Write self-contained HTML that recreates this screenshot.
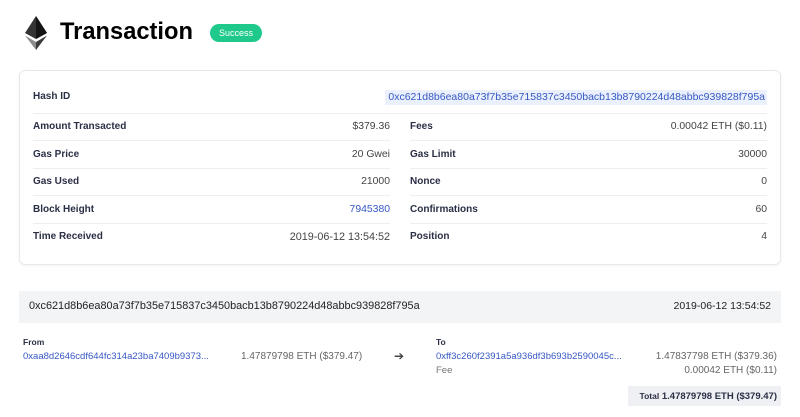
<!DOCTYPE html>
<html><head><style>
*{margin:0;padding:0;box-sizing:border-box}
body{width:800px;height:417px;background:#fff;font-family:"Liberation Sans",sans-serif;color:#333;position:relative;overflow:hidden;font-size:10px}
.a{position:absolute;white-space:nowrap}
.lbl{font-weight:bold;color:#2a2f45}
.v{text-align:right;color:#444;font-size:10.4px}
.ln{position:absolute;height:1px;background:#eceef1}
.blue{color:#3658c4}
</style></head><body>
<svg class="a" style="left:25px;top:16px" width="22" height="34" viewBox="0 0 22 34">
<polygon points="11,0 0,17 11,23 22,17" fill="#343434"/>
<polygon points="11,0 11,23 22,17" fill="#141414"/>
<polygon points="0,19.5 11,34 11,26" fill="#8c8c8c"/>
<polygon points="22,19.5 11,34 11,26" fill="#3c3c3b"/>
</svg>
<div class="a" style="left:60px;top:19px;font-size:23.7px;font-weight:bold;color:#000">Transaction</div>
<div class="a" style="left:210px;top:24px;width:52px;height:18px;border-radius:9px;background:#1ec98b;color:#fff;font-size:9px;text-align:center;line-height:18px">Success</div>

<div class="a" style="left:19px;top:70px;width:762px;height:195px;border:1px solid #e6e8ec;border-radius:6px;box-shadow:0 1px 3px rgba(0,0,0,0.05)"></div>
<div class="a lbl" style="left:33px;top:91px">Hash ID</div>
<div class="a blue" style="left:385px;top:90px;width:382px;height:15px;background:#eaf0fc;text-align:right;padding-right:2px;line-height:15px;font-size:10.5px">0xc621d8b6ea80a73f7b35e715837c3450bacb13b8790224d48abbc939828f795a</div>
<div class="ln" style="left:33px;top:113px;width:734px"></div>

<div class="a lbl" style="left:33px;top:121px">Amount Transacted</div><div class="a v" style="right:410px;top:121px">$379.36</div>
<div class="a lbl" style="left:410px;top:121px">Fees</div><div class="a v" style="right:33px;top:121px">0.00042 ETH ($0.11)</div>
<div class="ln" style="left:33px;top:140px;width:357px"></div><div class="ln" style="left:410px;top:140px;width:357px"></div>
<div class="a lbl" style="left:33px;top:149px">Gas Price</div><div class="a v" style="right:410px;top:149px">20 Gwei</div>
<div class="a lbl" style="left:410px;top:149px">Gas Limit</div><div class="a v" style="right:33px;top:149px">30000</div>
<div class="ln" style="left:33px;top:168px;width:357px"></div><div class="ln" style="left:410px;top:168px;width:357px"></div>
<div class="a lbl" style="left:33px;top:176px">Gas Used</div><div class="a v" style="right:410px;top:176px">21000</div>
<div class="a lbl" style="left:410px;top:176px">Nonce</div><div class="a v" style="right:33px;top:176px">0</div>
<div class="ln" style="left:33px;top:195px;width:357px"></div><div class="ln" style="left:410px;top:195px;width:357px"></div>
<div class="a lbl" style="left:33px;top:204px">Block Height</div><div class="a v blue" style="right:410px;top:204px">7945380</div>
<div class="a lbl" style="left:410px;top:204px">Confirmations</div><div class="a v" style="right:33px;top:204px">60</div>
<div class="ln" style="left:33px;top:223px;width:357px"></div><div class="ln" style="left:410px;top:223px;width:357px"></div>
<div class="a lbl" style="left:33px;top:231px">Time Received</div><div class="a v" style="right:410px;top:231px;font-size:10.8px">2019-06-12 13:54:52</div>
<div class="a lbl" style="left:410px;top:231px">Position</div><div class="a v" style="right:33px;top:231px">4</div>

<div class="a" style="left:19px;top:291px;width:762px;height:32px;background:#f3f4f6"></div>
<div class="a" style="left:29px;top:300px;font-size:10.9px;color:#222">0xc621d8b6ea80a73f7b35e715837c3450bacb13b8790224d48abbc939828f795a</div>
<div class="a" style="right:29px;top:300px;font-size:10.5px;color:#222">2019-06-12 13:54:52</div>

<div class="a lbl" style="left:23px;top:337px;font-size:8.5px">From</div>
<div class="a blue" style="left:23px;top:351px;font-size:9.5px">0xaa8d2646cdf644fc314a23ba7409b9373...</div>
<div class="a" style="left:241px;top:351px;color:#666">1.47879798 ETH ($379.47)</div>
<div class="a" style="left:394px;top:349px;font-size:12px;color:#444">➔</div>
<div class="a lbl" style="left:436px;top:337px;font-size:8.5px">To</div>
<div class="a blue" style="left:436px;top:351px;font-size:9.5px">0xff3c260f2391a5a936df3b693b2590045c...</div>
<div class="a" style="left:436px;top:365px;font-size:9.5px;color:#777">Fee</div>
<div class="a" style="right:23px;top:351px;color:#666">1.47837798 ETH ($379.36)</div>
<div class="a" style="right:23px;top:365px;color:#666">0.00042 ETH ($0.11)</div>
<div class="a" style="left:628px;top:386px;width:153px;height:20px;background:#eef0f3"></div>
<div class="a" style="right:23px;top:391px;font-weight:bold;color:#2a2f45;font-size:9.5px"><span style="font-size:8.5px">Total</span> 1.47879798 ETH ($379.47)</div>
</body></html>
